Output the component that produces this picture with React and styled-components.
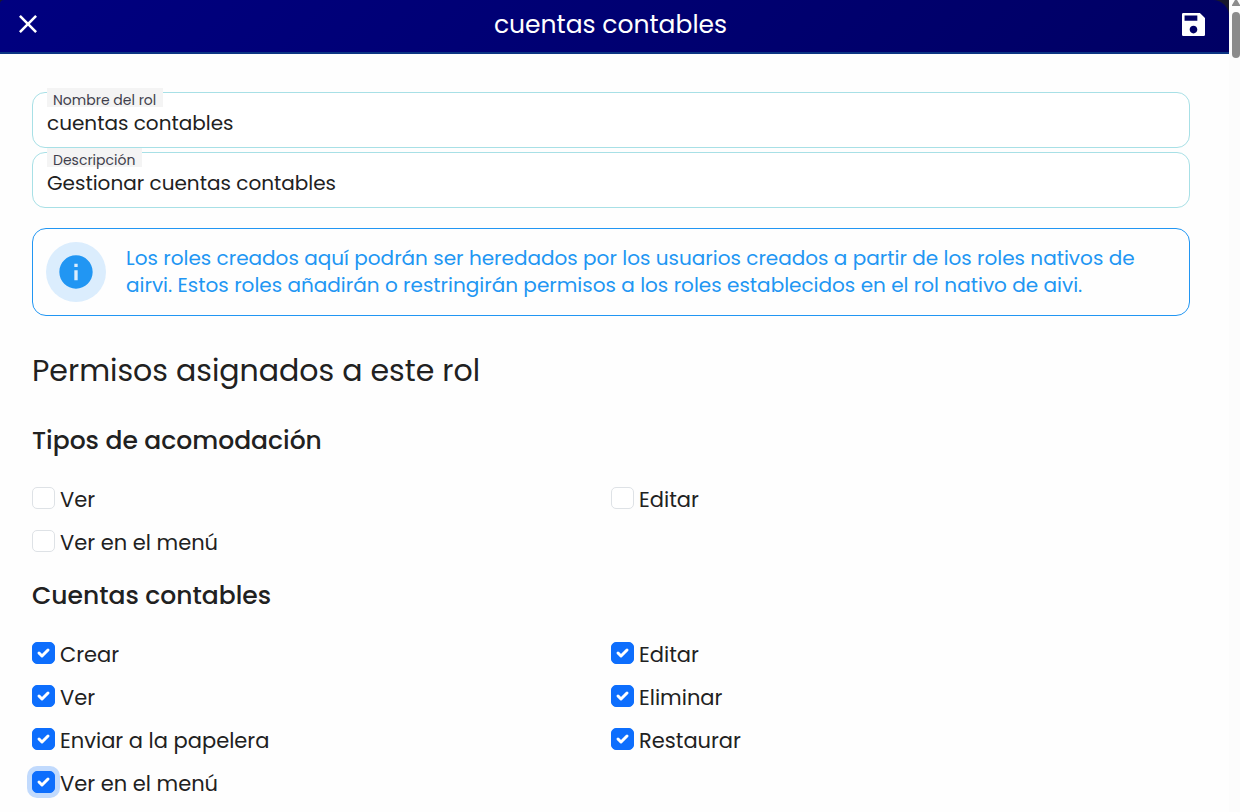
import React from "react";
import styled, { createGlobalStyle, css } from "styled-components";
import { MdInfo } from "react-icons/md";

const GlobalStyle = createGlobalStyle`
  *, *::before, *::after { box-sizing: border-box; }
  body {
    margin: 0;
    background: #fefefe;
    color: #212121;
    font-family: "Poppins", "Inter", "Liberation Sans", sans-serif;
  }
  h1, h2, h3, p { margin: 0; }
`;

const Shell = styled.div`
  display: grid;
  grid-template-columns: minmax(0, 1fr) 11px;
  height: 100vh;
  overflow: hidden;
`;

const Page = styled.div`
  min-width: 0;
  overflow: hidden;
`;

const HeaderBack = styled.div`
  background: #17172c;
`;

const Header = styled.header`
  display: grid;
  grid-template-columns: 38px 1fr 42px;
  align-items: center;
  height: 54px;
  padding: 0 14px 4px 10px;
  border-bottom: 2px solid #0b3584;
  border-radius: 4px 16px 0 0;
  background: linear-gradient(135deg, #000080, #000064);
  color: #fff;
`;

const Title = styled.h1`
  padding-top: 2px;
  font-size: 25px;
  line-height: 36px;
  font-weight: 400;
  text-align: center;
`;

const IconButton = styled.button`
  display: flex;
  align-items: center;
  justify-content: center;
  width: ${(p) => p.$width}px;
  height: 36px;
  padding: 0;
  border: 0;
  background: none;
  color: inherit;
  cursor: pointer;
`;

const Content = styled.main`
  padding: 38px 39px 0 32px;
`;

const Fields = styled.div`
  display: grid;
  gap: 4px;
`;

const Field = styled.div`
  position: relative;
  height: 56px;
`;

const FieldLabel = styled.label`
  position: absolute;
  top: -4px;
  left: 15px;
  height: 19px;
  padding: 0 7px 0 6px;
  background: #f4f4f4;
  color: #3f3f4c;
  font-size: 14px;
  line-height: 24px;
`;

const TextInput = styled.input`
  display: block;
  width: 100%;
  height: 100%;
  padding: 8px 14px 2px;
  border: 1px solid #a8e0e6;
  border-radius: 13px;
  background: #fff;
  color: #212121;
  font-family: inherit;
  font-size: 20px;
  outline: none;
`;

const Notice = styled.section`
  display: flex;
  align-items: center;
  gap: 20px;
  min-height: 88px;
  margin-top: 20px;
  padding: 13px;
  border: 1px solid #2196f3;
  border-radius: 14px;
  color: #2196f3;
  font-size: 20px;
  line-height: 27px;
`;

const NoticeIcon = styled.span`
  display: flex;
  flex: none;
  align-items: center;
  justify-content: center;
  width: 60px;
  height: 60px;
  border-radius: 50%;
  background: #dbedfd;
`;

const PageHeading = styled.h2`
  margin: 35px 0 17px;
  font-size: 30px;
  line-height: 40px;
  font-weight: 400;
`;

const GroupHeading = styled.h3`
  padding: 18px 0 21px;
  font-size: 25px;
  line-height: 30px;
  font-weight: 500;
`;

const Options = styled.div`
  display: grid;
  grid-template-columns: 1fr 1fr;
  grid-auto-rows: 43px;
`;

const Option = styled.div`
  display: flex;
  align-items: center;
  gap: 5px;
`;

const OptionLabel = styled.label`
  padding-top: 3px;
  font-size: 21px;
  line-height: 30px;
`;

const tick = encodeURIComponent(
  "<svg xmlns='http://www.w3.org/2000/svg' viewBox='0 0 20 20'><path fill='none' stroke='#fff' stroke-linecap='round' stroke-linejoin='round' stroke-width='3' d='m6 10 3 3 6-6'/></svg>"
);

const Checkbox = styled.input`
  appearance: none;
  flex: none;
  width: 23px;
  height: 22px;
  margin: 0 0 1px;
  border: 1px solid #dee2e6;
  border-radius: 5px;
  background: #fff;
  &:checked {
    border-color: #0d6efd;
    background: #0d6efd url("data:image/svg+xml,${tick}") left center / 20px 20px no-repeat;
  }
  ${(p) =>
    p.$focused &&
    css`
      box-shadow: 0 0 0 5px rgba(13, 110, 253, 0.25);
    `}
`;

const ScrollTrack = styled.div`
  display: flex;
  flex-direction: column;
  align-items: flex-end;
  gap: 6px;
  background: #fcfcfc;
`;

const ScrollArrow = styled.svg`
  display: block;
  width: 8px;
  height: 6px;
`;

const ScrollThumb = styled.div`
  width: 8px;
  height: 46px;
  border-radius: 4px;
  background: #8b8b8b;
`;

const groups = [
  {
    id: "acomodacion",
    title: "Tipos de acomodación",
    options: [{ label: "Ver" }, { label: "Editar" }, { label: "Ver en el menú" }],
  },
  {
    id: "cuentas",
    title: "Cuentas contables",
    options: [
      { label: "Crear", on: true },
      { label: "Editar", on: true },
      { label: "Ver", on: true },
      { label: "Eliminar", on: true },
      { label: "Enviar a la papelera", on: true },
      { label: "Restaurar", on: true },
      { label: "Ver en el menú", on: true, focused: true },
    ],
  },
];

export default function App() {
  return (
    <>
      <GlobalStyle />
      <Shell>
        <Page>
          <HeaderBack>
            <Header>
              <IconButton type="button" aria-label="Cerrar" $width={36}>
                <svg width="18" height="18" viewBox="5 5 14 14" fill="currentColor">
                  <path d="M19 6.41 17.59 5 12 10.59 6.41 5 5 6.41 10.59 12 5 17.59 6.41 19 12 13.41 17.59 19 19 17.59 13.41 12z" />
                </svg>
              </IconButton>
              <Title>cuentas contables</Title>
              <IconButton type="button" aria-label="Guardar" $width={41}>
                <svg width="23" height="23" viewBox="3 3 18 18" fill="currentColor">
                  <path d="M17 3H4a1 1 0 0 0-1 1v16a1 1 0 0 0 1 1h16a1 1 0 0 0 1-1V7zm-5 16c-1.66 0-3-1.34-3-3s1.34-3 3-3 3 1.34 3 3-1.34 3-3 3zm3-10H5V5h10z" />
                </svg>
              </IconButton>
            </Header>
          </HeaderBack>
          <Content>
            <Fields>
              <Field>
                <TextInput id="nombre" defaultValue="cuentas contables" />
                <FieldLabel htmlFor="nombre">Nombre del rol</FieldLabel>
              </Field>
              <Field>
                <TextInput id="descripcion" defaultValue="Gestionar cuentas contables" />
                <FieldLabel htmlFor="descripcion">Descripción</FieldLabel>
              </Field>
            </Fields>
            <Notice>
              <NoticeIcon>
                <MdInfo size={40} />
              </NoticeIcon>
              <p>
                Los roles creados aquí podrán ser heredados por los usuarios creados a partir de
                los roles nativos de airvi. Estos roles añadirán o restringirán permisos a los
                roles establecidos en el rol nativo de aivi.
              </p>
            </Notice>
            <PageHeading>Permisos asignados a este rol</PageHeading>
            {groups.map((group) => (
              <section key={group.id}>
                <GroupHeading>{group.title}</GroupHeading>
                <Options>
                  {group.options.map((option) => {
                    const id = `${group.id}-${option.label.toLowerCase().replace(/ /g, "-")}`;
                    return (
                      <Option key={id}>
                        <Checkbox
                          type="checkbox"
                          id={id}
                          defaultChecked={option.on}
                          $focused={option.focused}
                        />
                        <OptionLabel htmlFor={id}>{option.label}</OptionLabel>
                      </Option>
                    );
                  })}
                </Options>
              </section>
            ))}
          </Content>
        </Page>
        <ScrollTrack aria-hidden="true">
          <ScrollArrow viewBox="0 0 8 6">
            <path d="M3 0h2l3 5v1H0V5z" fill="#8b8b8b" />
          </ScrollArrow>
          <ScrollThumb />
        </ScrollTrack>
      </Shell>
    </>
  );
}
